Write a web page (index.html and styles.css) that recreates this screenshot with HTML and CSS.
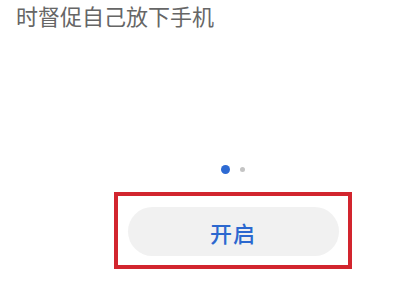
FILE: index.html
```html
<!DOCTYPE html>
<html lang="zh">
<head>
<meta charset="UTF-8">
<meta name="viewport" content="width=device-width, initial-scale=1.0">
<title>开启</title>
<link rel="stylesheet" href="styles.css">
</head>
<body>

<p class="tip">时督促自己放下手机</p>

<div class="stage">
  <div class="dots">
    <span class="dot active"></span>
    <span class="dot"></span>
  </div>

  <div class="mark">
    <button class="open-btn">开启</button>
  </div>
</div>

</body>
</html>
```

FILE: styles.css
```css
body {
  margin: 0;
  padding: 0;
  background: #fff;
  font-family: "Noto Sans CJK SC", "Noto Sans", sans-serif;
  width: 412px;
  height: 286px;
  overflow: hidden;
}

.tip {
  margin: 0;
  padding: 2px 0 0 16px;
  font-size: 22px;
  line-height: 27px;
  color: #666;
}

.stage {
  margin-left: 54px;
  display: flex;
  flex-direction: column;
  align-items: center;
}

/* pager dots */
.dots {
  margin-top: 136px;
  height: 9px;
  display: flex;
  align-items: center;
  gap: 10px;
}

.dot {
  width: 5px;
  height: 5px;
  border-radius: 50%;
  background: #c4c4c4;
}

.dot.active {
  width: 9px;
  height: 9px;
  background: #2d6ad3;
}

/* red highlight box */
.mark {
  margin-top: 18px;
  box-sizing: border-box;
  width: 238px;
  height: 77px;
  padding-top: 2px;
  border: 4px solid #d2252e;
  display: flex;
  align-items: center;
  justify-content: center;
}

.open-btn {
  width: 211px;
  height: 49px;
  padding: 0;
  border: none;
  border-radius: 25px;
  background: #f1f1f1;
  color: #2c68cf;
  font-family: inherit;
  font-size: 22px;
  font-weight: 500;
  letter-spacing: 1px;
  cursor: pointer;
}
```
